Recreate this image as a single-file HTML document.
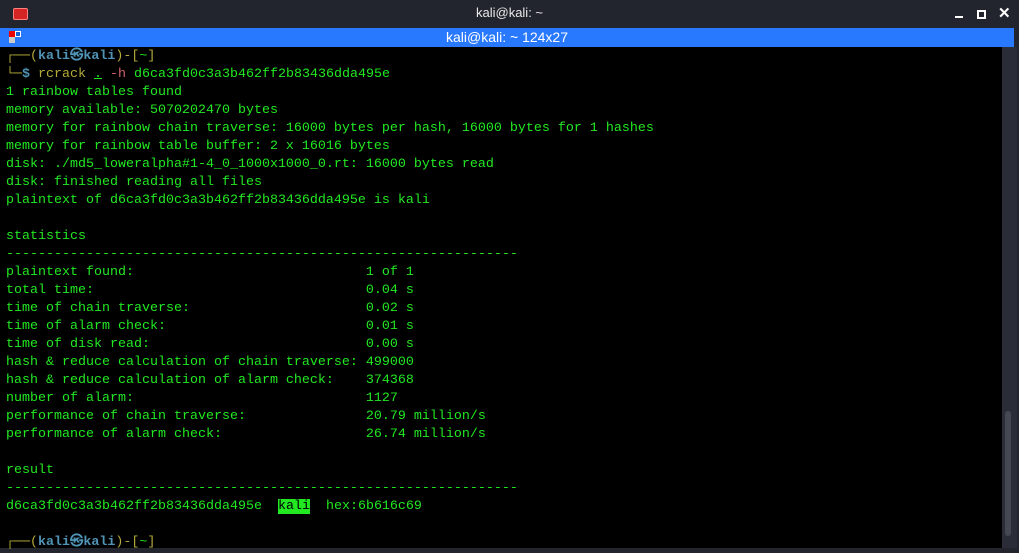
<!DOCTYPE html>
<html><head><meta charset="utf-8"><style>
*{margin:0;padding:0;box-sizing:border-box}
body{width:1019px;height:553px;background:#22252e;overflow:hidden;position:relative;font-family:"Liberation Sans",sans-serif}
.title{position:absolute;left:0;top:0;width:1019px;height:28px;background:#22252e;color:#e8e8e8;font-size:13px;text-align:center;line-height:26px}
.tab{position:absolute;left:0;top:28px;width:1014px;height:19px;background:#2979fe;color:#fff;font-size:14px;text-align:center;line-height:19px}
.term{position:absolute;left:0;top:47px;width:1002px;height:501px;background:#000}
.sb{position:absolute;left:1002px;top:47px;width:15px;height:501px;background:#2a2d38}
.thumb{position:absolute;left:1005px;top:411px;width:6px;height:125px;background:#454852;border-radius:3px}
pre{position:absolute;left:6px;top:48px;font-family:"Liberation Mono","DejaVu Sans Mono",monospace;font-size:13.33px;line-height:18px;color:#22e822;white-space:pre}
.y{color:#b5aa3a}.b{color:#4f93b5;font-weight:bold}.r{color:#d0606c}.hl{background:#22e822;color:#000}
</style></head><body>
<div class="title">kali@kali: ~</div>
<div style="position:absolute;left:13px;top:8px;width:15px;height:12px;background:#d42424;border:1px solid #ff8080;border-radius:2px"></div>
<div style="position:absolute;left:955px;top:16px;width:8px;height:2px;background:#fff"></div>
<div style="position:absolute;left:977px;top:10px;width:9px;height:9px;border:2px solid #fff"></div>
<div style="position:absolute;left:998px;top:4px;color:#fff;font-size:15px;font-weight:bold">✕</div>
<div class="tab">kali@kali: ~ 124x27</div>
<div style="position:absolute;left:9px;top:31px;width:6px;height:6px;background:#e00"></div>
<div style="position:absolute;left:15px;top:31px;width:6px;height:6px;background:#1a60d0;border:1px solid #fff"></div>
<div style="position:absolute;left:9px;top:37px;width:6px;height:6px;background:#ccc"></div>
<div class="term"></div>
<div class="sb"></div><div class="thumb"></div>
<pre><span class="y">┌──(</span><span class="b">kali㉿kali</span><span class="y">)-[</span>~<span class="y">]</span>
<span class="y">└─</span><span class="b">$</span> <span class="y">rcrack</span> <u>.</u> <span class="r">-h</span> d6ca3fd0c3a3b462ff2b83436dda495e
1 rainbow tables found
memory available: 5070202470 bytes
memory for rainbow chain traverse: 16000 bytes per hash, 16000 bytes for 1 hashes
memory for rainbow table buffer: 2 x 16016 bytes
disk: ./md5_loweralpha#1-4_0_1000x1000_0.rt: 16000 bytes read
disk: finished reading all files
plaintext of d6ca3fd0c3a3b462ff2b83436dda495e is kali

statistics
----------------------------------------------------------------
plaintext found:                             1 of 1
total time:                                  0.04 s
time of chain traverse:                      0.02 s
time of alarm check:                         0.01 s
time of disk read:                           0.00 s
hash &amp; reduce calculation of chain traverse: 499000
hash &amp; reduce calculation of alarm check:    374368
number of alarm:                             1127
performance of chain traverse:               20.79 million/s
performance of alarm check:                  26.74 million/s

result
----------------------------------------------------------------
d6ca3fd0c3a3b462ff2b83436dda495e  <span class="hl">kali</span>  hex:6b616c69

<span class="y">┌──(</span><span class="b">kali㉿kali</span><span class="y">)-[</span>~<span class="y">]</span></pre>
</body></html>
